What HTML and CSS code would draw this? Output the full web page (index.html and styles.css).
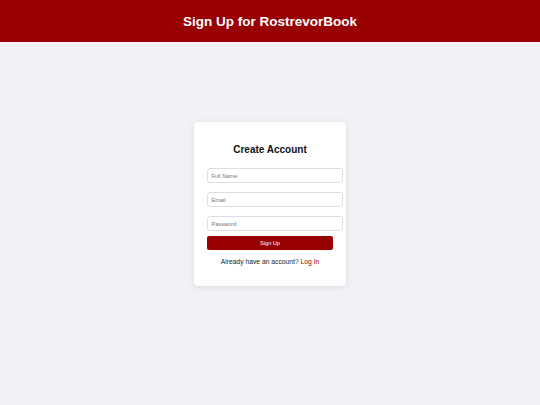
FILE: index.html
```html
<!DOCTYPE html>
<html lang="en">
<head>
<meta charset="utf-8">
<title>Sign Up for RostrevorBook</title>
<link rel="stylesheet" href="styles.css">
</head>
<body>
<header class="topbar">
  <h1 class="topbar-title">Sign Up for RostrevorBook</h1>
</header>
<main class="page">
  <div class="card">
    <h2 class="card-title">Create Account</h2>
    <form class="form">
      <input class="field" type="text" placeholder="Full Name">
      <input class="field" type="email" placeholder="Email">
      <input class="field field-last" type="password" placeholder="Password">
      <button class="btn" type="button">Sign Up</button>
    </form>
    <p class="switch">Already have an account? <a class="link" href="#">Log In</a></p>
  </div>
</main>
</body>
</html>
```

FILE: styles.css
```css
html, body {
  margin: 0;
  padding: 0;
}
body {
  background: #f0f2f5;
  font-family: "Liberation Sans", Arial, sans-serif;
  color: #1c1e21;
  height: 405px;
}
.topbar {
  background: #990000;
  height: 42px;
  display: flex;
  align-items: center;
  justify-content: center;
}
.topbar-title {
  margin: 0;
  color: #ffffff;
  font-size: 13.5px;
  font-weight: bold;
  line-height: normal;
}
.page {
  display: flex;
  justify-content: center;
  padding-top: 80px;
}
.card {
  width: 126px;
  padding: 13.5px 13px;
  background: #ffffff;
  border-radius: 4px;
  box-shadow: 0 1px 6px rgba(0, 0, 0, 0.1);
  text-align: center;
}
.card-title {
  margin: 8px 0 13px;
  font-size: 10px;
  line-height: 11.5px;
  font-weight: bold;
  color: #111;
}
.form {
  display: flex;
  flex-direction: column;
  align-items: flex-start;
}
.field {
  box-sizing: border-box;
  width: 136px;
  height: 15px;
  margin: 0 0 9px;
  padding: 0 3.4px;
  border: 1px solid #dddfe2;
  border-radius: 2.7px;
  font-family: "Liberation Sans", Arial, sans-serif;
  font-size: 5.7px;
  color: #333;
  background: #fff;
  outline: none;
}
.field::placeholder {
  color: #777;
}
.field-last {
  margin-bottom: 4.5px;
}
.btn {
  box-sizing: border-box;
  width: 126px;
  height: 14.5px;
  padding: 0;
  border: none;
  border-radius: 2px;
  background: #990000;
  color: #ffffff;
  font-family: "Liberation Sans", Arial, sans-serif;
  font-size: 5.6px;
  cursor: pointer;
}
.switch {
  margin: 8px 0 6.5px;
  font-size: 6.75px;
  line-height: 8px;
  color: #1c1e21;
}
.link {
  color: #990000;
  text-decoration: none;
}
```
